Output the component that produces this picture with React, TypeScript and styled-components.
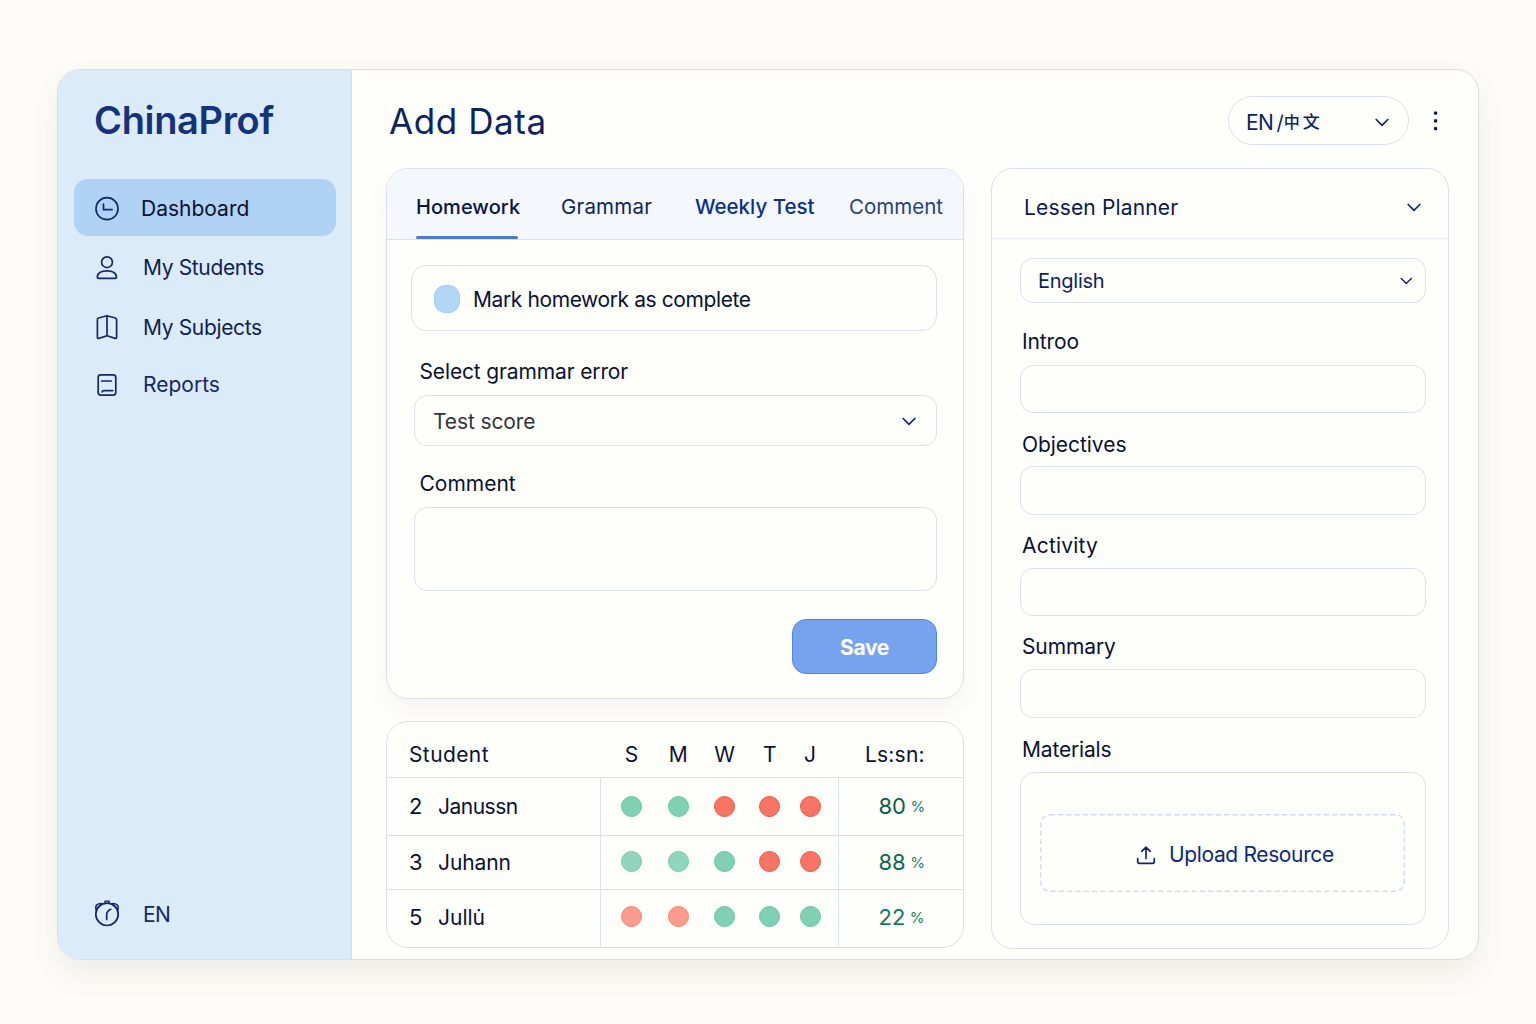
import React from 'react';
import styled, { createGlobalStyle } from 'styled-components';

const Global = createGlobalStyle`
  *, *::before, *::after { box-sizing: border-box; }
  html, body { margin: 0; padding: 0; }
  body {
    background: #fdfcf8;
    font-family: Inter, "Noto Sans CJK SC", sans-serif;
    color: #0b1230;
    -webkit-font-smoothing: antialiased;
  }
`;

const line = '#dbdfe9';
const navy = '#0c2461';

const Page = styled.div`
  height: 1024px;
  padding: 69px 57px 64px;
`;

const Window = styled.div`
  display: grid;
  grid-template-columns: 294px 1fr;
  width: 1422px;
  height: 891px;
  overflow: hidden;
  background: #fefefb;
  border: 1px solid #d9dce3;
  border-radius: 23px;
  box-shadow: 0 14px 30px rgba(90, 80, 60, 0.09);
`;

const Sidebar = styled.aside`
  display: flex;
  flex-direction: column;
  padding: 28px 15px 0 16px;
  background: #dcebfa;
  border-right: 1px solid #cfdeed;
`;

const Text = styled.span<{ $size?: number; $weight?: number; $ls?: number; $color?: string }>`
  display: inline-block;
  font-size: ${p => p.$size ?? 21}px;
  font-weight: ${p => p.$weight ?? 380};
  letter-spacing: ${p => p.$ls ?? 0}px;
  color: ${p => p.$color ?? 'inherit'};
  line-height: 1.2;
  white-space: pre;
`;

const Logo = styled.div`
  height: 81px;
  padding-left: 20px;
`;

const Nav = styled.nav`
  display: flex;
  flex-direction: column;
  gap: 2px;
`;

const NavItem = styled.a<{ $active?: boolean; $height?: number }>`
  display: flex;
  align-items: center;
  gap: ${p => (p.$active ? 21 : 23)}px;
  height: ${p => p.$height ?? 57}px;
  padding: ${p => (p.$active ? 2 : 1)}px 0 0 20px;
  border-radius: 14px;
  background: ${p => (p.$active ? '#afd2f5' : 'transparent')};
`;

const Icon = styled.svg`
  flex: none;
  fill: none;
  stroke: #14276b;
  stroke-width: 1.7;
  stroke-linecap: round;
  stroke-linejoin: round;
`;

const Language = styled.div`
  display: flex;
  align-items: center;
  gap: 23px;
  margin-top: auto;
  height: 40px;
  margin-bottom: 24px;
  padding-left: 20px;
`;

const Main = styled.main`
  display: flex;
  flex-direction: column;
  padding: 0 29px 10px 34px;
`;

const Header = styled.header`
  display: flex;
  align-items: center;
  height: 98px;
  padding: 3px 5px 0 3px;
`;

const LangSelect = styled.button`
  display: flex;
  align-items: center;
  justify-content: space-between;
  width: 181px;
  height: 49px;
  margin-left: auto;
  margin-right: 19px;
  padding: 3px 19px 0 17px;
  font: inherit;
  color: ${navy};
  background: transparent;
  border: 1px solid ${line};
  border-radius: 25px;
`;

const LangText = styled.span`
  display: flex;
  align-items: center;
  gap: 3px;
  padding-top: 1px;
`;

const Slash = styled(Text)`
  margin-right: -3px;
`;

const Columns = styled.div`
  display: grid;
  grid-template-columns: 578px 458px;
  gap: 27px;
`;

const Stack = styled.div`
  display: flex;
  flex-direction: column;
  gap: 22px;
`;

const Card = styled.section<{ $height: number; $shadow?: boolean }>`
  height: ${p => p.$height}px;
  overflow: hidden;
  border: 1px solid ${line};
  border-radius: 22px;
  box-shadow: ${p => (p.$shadow ? '0 12px 22px rgba(90, 80, 60, 0.05)' : 'none')};
`;

const Tabs = styled.div`
  display: flex;
  height: 71px;
  padding-left: 29px;
  background: #f4f8fd;
  border-bottom: 1px solid ${line};
`;

const Tab = styled.button<{ $active?: boolean; $width: number }>`
  display: flex;
  flex-direction: column;
  align-items: flex-start;
  width: ${p => p.$width}px;
  padding: 26px 0 0;
  font: inherit;
  background: none;
  border: 0;

  &::after {
    content: '';
    width: 102px;
    height: 3px;
    margin-top: auto;
    border-radius: 2px;
    background: ${p => (p.$active ? '#4b7bc9' : 'transparent')};
  }
`;

const Form = styled.div`
  display: flex;
  flex-direction: column;
  padding: 25px 26px 0 27px;
`;

const CheckRow = styled.label`
  display: flex;
  align-items: center;
  gap: 13px;
  height: 66px;
  margin-left: -3px;
  padding: 3px 0 0 22px;
  border: 1px solid ${line};
  border-radius: 15px;
`;

const Check = styled.span`
  width: 26px;
  height: 28px;
  margin-bottom: 1px;
  border-radius: 11px;
  background: #b2d6f6;
  border: 1px solid #a3cdf3;
`;

const FieldLabel = styled.div<{ $height: number; $top: number; $left?: number }>`
  height: ${p => p.$height}px;
  padding-top: ${p => p.$top}px;
  padding-left: ${p => p.$left ?? 5.5}px;
`;

const Field = styled.div<{ $height: number; $top?: number; $pad?: number; $padRight?: number }>`
  display: flex;
  align-items: center;
  justify-content: space-between;
  height: ${p => p.$height}px;
  padding: ${p => p.$top ?? 2}px ${p => p.$padRight ?? 20}px 0 ${p => p.$pad ?? 18}px;
  border: 1px solid ${line};
  border-radius: 13px;
`;

const Save = styled.button`
  align-self: flex-end;
  width: 145px;
  height: 55px;
  margin-top: 28px;
  padding: 2px 0 0;
  font: inherit;
  color: #fff;
  background: #77a3ee;
  border: 1px solid #4f86e4;
  border-radius: 14px;
`;

const TableRow = styled.div<{ $height: number; $head?: boolean; $last?: boolean }>`
  display: grid;
  grid-template-columns: 213px 238px 1fr;
  height: ${p => p.$height}px;
  padding-top: ${p => (p.$head ? 10 : 0)}px;
  border-bottom: ${p => (p.$last ? 0 : 1)}px solid ${line};

  & > * + * {
    border-left: 1px solid ${p => (p.$head ? 'transparent' : line)};
  }
`;

const NameCell = styled.div<{ $lift?: number }>`
  display: flex;
  align-items: center;
  padding-left: 22px;
  padding-bottom: ${p => p.$lift ?? 0}px;
`;

const NumberBox = styled.span`
  width: 29px;
`;

const Days = styled.div<{ $lift?: number }>`
  display: grid;
  grid-template-columns: 47px 46.5px 46px 44.5px 36px;
  align-items: center;
  justify-items: center;
  padding-left: 7px;
  padding-bottom: ${p => p.$lift ?? 0}px;
`;

const Dot = styled.span<{ $kind: string }>`
  width: 21px;
  height: 21px;
  border-radius: 50%;
  background: ${p => ({ g: '#80d1b3', l: '#8fd6be', r: '#f77564', p: '#fc9c8d' } as Record<string, string>)[p.$kind]};
  border: 1px solid ${p => ({ g: '#63c6a0', l: '#6fcbaa', r: '#ef543f', p: '#f97f6e' } as Record<string, string>)[p.$kind]};
`;

const ScoreCell = styled.div<{ $head?: boolean; $lift?: number }>`
  display: flex;
  align-items: center;
  padding-left: ${p => (p.$head ? 26 : 39.5)}px;
  padding-bottom: ${p => p.$lift ?? 0}px;
  gap: 4.5px;
`;

const PlannerHead = styled.div`
  display: flex;
  align-items: center;
  justify-content: space-between;
  height: 70px;
  padding: 8px 27px 0 32px;
  border-bottom: 1px solid #e9ebef;
`;

const PlannerBody = styled.div`
  padding: 19px 22px 0 28px;
`;

const Materials = styled.div`
  height: 153px;
  padding: 41px 20px 0 19px;
  border: 1px solid ${line};
  border-radius: 14px;
`;

const Dashed = styled.svg`
  fill: none;
  stroke: #d3dcec;
  stroke-width: 1.4;
  stroke-dasharray: 5.2 3.1;
  position: absolute;
  inset: 0;
`;

const Upload = styled.button`
  position: relative;
  display: flex;
  align-items: center;
  width: 365px;
  height: 78px;
  padding: 3px 0 0 96px;
  gap: 13px;
  font: inherit;
  background: none;
  border: 0;
`;

const Chevron = ({ w = 12, sw = 1.7 }: { w?: number; sw?: number }) => (
  <Icon width={w + 2} height={w / 2 + 3} viewBox={`0 0 ${w + 2} ${w / 2 + 3}`}>
    <path d={`M1.2 1.5 L${w / 2 + 1} ${w / 2 + 1.3} L${w + 0.8} 1.5`} strokeWidth={sw} />
  </Icon>
);

const DashboardIcon = () => (
  <Icon width="26" height="26" viewBox="0 0 26 26">
    <circle cx="13" cy="12.7" r="11" />
    <path d="M9.5 8.2 V13.7 H18" />
  </Icon>
);

const StudentIcon = () => (
  <Icon width="26" height="26" viewBox="0 0 26 26">
    <circle cx="13" cy="7.2" r="5.4" />
    <path d="M4.6 23.3 H21.2 Q22.6 23.3 22.5 21.8 C22.1 18 18.3 15.9 12.9 15.9 C7.5 15.9 3.7 18 3.3 21.8 Q3.2 23.3 4.6 23.3 Z" />
  </Icon>
);

const SubjectsIcon = () => (
  <Icon width="26" height="28" viewBox="0 -0.5 26 28">
    <path d="M13 1.2 L4.6 3.5 Q3.4 3.9 3.4 5.1 V22.9 Q3.4 24.3 4.8 23.9 L13 21.3 L21.2 23.9 Q22.6 24.3 22.6 22.9 V5.1 Q22.6 3.9 21.4 3.5 Z M13 1.2 V21.3" />
  </Icon>
);

const ReportsIcon = () => (
  <Icon width="26" height="26" viewBox="0 0 26 26">
    <rect x="4.2" y="2.8" width="17.6" height="20.4" rx="2.6" />
    <path d="M7.6 9 H17.2 M8.1 20 Q8.3 18.6 9.9 18.6 H18.7" />
  </Icon>
);

const ClockIcon = () => (
  <Icon width="26" height="30" viewBox="0 -0.5 26 30">
    <circle cx="13" cy="13.8" r="11.2" />
    <path d="M11 3 V0.6 H15.2 V3 M2 9.4 C0.9 4.8 3.2 2.7 8.4 3.1 L2.4 8.4 M24 9.4 C25.1 4.8 22.8 2.7 17.6 3.1 L23.6 8.4" strokeWidth="1.4" />
    <path d="M12.7 19 V14 Q12.9 10.6 16.8 8.8" />
  </Icon>
);

const MoreIcon = () => (
  <svg width="16" height="24" viewBox="0 0 16 24" fill="#0b1648">
    <rect x="6" y="2.5" width="3.2" height="3.2" rx="0.8" />
    <rect x="6" y="10.3" width="3.2" height="3.2" rx="0.8" />
    <rect x="6" y="18.1" width="3.2" height="3.2" rx="0.8" />
  </svg>
);

const rows = [
  { n: '2', name: 'Janussn', ls: -0.5, days: 'ggrrr', score: '80', h: 58, lift: 0, dotLift: 1, c: '#0c5f49' },
  { n: '3', name: 'Juhann', ls: -0.1, days: 'llgrr', score: '88', h: 54, lift: 0, dotLift: 2, c: '#0c6a50' },
  { n: '5', name: 'Jullu\u0307', ls: 0, days: 'ppggg', score: '22', h: 56, lift: 1, dotLift: 3, c: '#12795c' },
];

const planner = [
  { label: 'Introo', ls: -0.1, lh: 62, top: 26, h: 48 },
  { label: 'Objectives', ls: -0.05, lh: 53, top: 18.5, h: 49 },
  { label: 'Activity', ls: 0.2, lh: 53, top: 18, h: 48 },
  { label: 'Summary', ls: -0.1, lh: 53, top: 18, h: 49 },
  { label: 'Materials', ls: -0.17, lh: 54, top: 19, h: 0 },
];

export default function App() {
  return (
    <>
      <Global />
      <Page>
        <Window>
          <Sidebar>
            <Logo><Text $size={38} $weight={600} $ls={-0.35} $color="#14337a">ChinaProf</Text></Logo>
            <Nav>
              <NavItem $active><DashboardIcon /><Text>Dashboard</Text></NavItem>
              <NavItem $height={59}><StudentIcon /><Text $ls={-0.35} $color="#101f52">My Students</Text></NavItem>
              <NavItem $height={56}><SubjectsIcon /><Text $ls={-0.35} $color="#101f52">My Subjects</Text></NavItem>
              <NavItem $height={55}><ReportsIcon /><Text $color="#14276b">Reports</Text></NavItem>
            </Nav>
            <Language><ClockIcon /><Text $ls={-0.5} $color="#14276b">EN</Text></Language>
          </Sidebar>
          <Main>
            <Header>
              <Text $size={35} $ls={0.6} $weight={420} $color={navy}>Add Data</Text>
              <LangSelect>
                <LangText>
                  <Text $ls={-0.5}>EN</Text>
                  <Slash $size={20}>/</Slash>
                  <Text $size={16} $weight={500}>中</Text>
                  <Text $size={17} $weight={500}>文</Text>
                </LangText>
                <Chevron />
              </LangSelect>
              <MoreIcon />
            </Header>
            <Columns>
              <Stack>
                <Card $height={531} $shadow>
                  <Tabs>
                    <Tab $active $width={145}><Text $size={20} $weight={500} $ls={0.05} $color="#0a1640">Homework</Text></Tab>
                    <Tab $width={134}><Text $size={20.5} $ls={0.2} $color={navy}>Grammar</Text></Tab>
                    <Tab $width={154}><Text $size={20.5} $weight={480} $color="#0b2f8f">Weekly Test</Text></Tab>
                    <Tab $width={110}><Text $size={20.5} $color="#27437c">Comment</Text></Tab>
                  </Tabs>
                  <Form>
                    <CheckRow><Check /><Text $ls={-0.4}>Mark homework as complete</Text></CheckRow>
                    <FieldLabel $height={64} $top={28}><Text $ls={-0.14}>Select grammar error</Text></FieldLabel>
                    <Field $height={51}><Text $ls={-0.12} $color="#33343c">Test score</Text><Chevron /></Field>
                    <FieldLabel $height={61} $top={25}><Text>Comment</Text></FieldLabel>
                    <Field $height={84} />
                    <Save><Text $weight={700} $ls={-0.3}>Save</Text></Save>
                  </Form>
                </Card>
                <Card $height={227}>
                  <TableRow $height={56} $head>
                    <NameCell><Text $ls={0.4}>Student</Text></NameCell>
                    <Days>{[...'SMWTJ'].map(d => <Text key={d} $weight={400}>{d}</Text>)}</Days>
                    <ScoreCell $head><Text $ls={0.2}>Ls:sn:</Text></ScoreCell>
                  </TableRow>
                  {rows.map((r, i) => (
                    <TableRow key={r.n} $height={r.h} $last={i === 2}>
                      <NameCell $lift={r.lift}><NumberBox><Text $size={22}>{r.n}</Text></NumberBox><Text $ls={r.ls}>{r.name}</Text></NameCell>
                      <Days $lift={r.dotLift}>{[...r.days].map((d, j) => <Dot key={j} $kind={d} />)}</Days>
                      <ScoreCell $lift={r.lift}><Text $size={22} $color={r.c}>{r.score}</Text><Text $size={15} $color="#1d8265">%</Text></ScoreCell>
                    </TableRow>
                  ))}
                </Card>
              </Stack>
              <Card $height={781}>
                <PlannerHead><Text $ls={0.15} $color="#0a1a4d">Lessen Planner</Text><Chevron /></PlannerHead>
                <PlannerBody>
                  <Field $height={45} $top={1} $pad={17} $padRight={13}><Text $size={20} $ls={-0.25} $color={navy}>English</Text><Chevron w={10.5} sw={1.4} /></Field>
                  {planner.map(f => (
                    <React.Fragment key={f.label}>
                      <FieldLabel $height={f.lh} $top={f.top} $left={2}><Text $ls={f.ls}>{f.label}</Text></FieldLabel>
                      {f.h > 0 && <Field $height={f.h} />}
                    </React.Fragment>
                  ))}
                  <Materials>
                    <Upload>
                      <Dashed width="365" height="78"><rect x="0.7" y="0.7" width="363.6" height="76.6" rx="9" /></Dashed>
                      <Icon width="20" height="20" viewBox="0 0 20 20">
                        <path d="M10 13.5 V2.2 M5.8 6.4 L10 2.2 L14.2 6.4 M1.7 13.5 V16.5 Q1.7 18.3 3.5 18.3 H16.5 Q18.3 18.3 18.3 16.5 V13.5" />
                      </Icon>
                      <Text $ls={-0.36} $color="#0b2a7a">Upload Resource</Text>
                    </Upload>
                  </Materials>
                </PlannerBody>
              </Card>
            </Columns>
          </Main>
        </Window>
      </Page>
    </>
  );
}
